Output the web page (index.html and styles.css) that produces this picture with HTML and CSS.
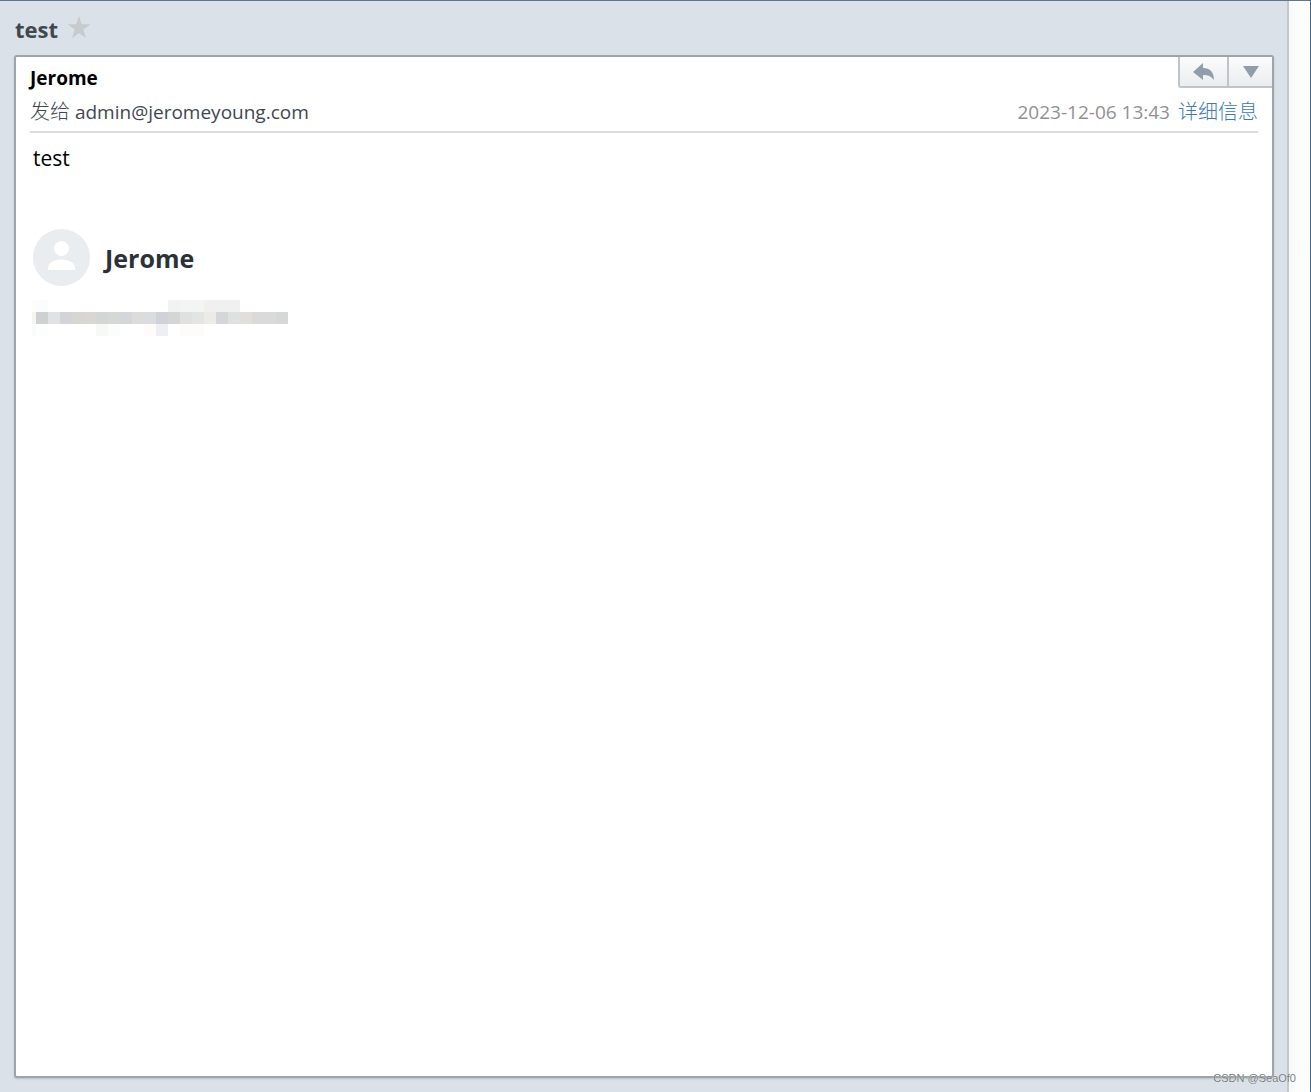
FILE: index.html
```
<!DOCTYPE html>
<html lang="zh-CN">
<head>
<meta charset="utf-8">
<title>test</title>
<link rel="stylesheet" href="styles.css">
</head>
<body>
<div class="window">
  <main class="reader">
    <header class="subject">
      <h1 class="subject-title">test</h1>
      <button class="star" type="button" aria-label="星标">
        <svg width="24" height="24" viewBox="0 0 24 24"><path d="M12 1l2.800 8.200H23.500l-7.200 5.300 2.700 8.700L12 18 5 23.200l2.700-8.700L.5 9.200h8.700z" fill="#c8cbcd"/></svg>
      </button>
    </header>
    <article class="mail">
      <div class="mail-top">
        <h2 class="sender">Jerome</h2>
        <div class="actions">
          <button class="action reply" type="button" aria-label="回复">
            <svg width="22" height="18" viewBox="0 0 22 18"><path d="M0 9L10 0v5c7 0 11 4 11 12-3-4-6-5-11-5v5z" fill="#929dab"/></svg>
          </button>
          <button class="action more" type="button" aria-label="更多">
            <svg width="16" height="12" viewBox="0 0 16 12"><path d="M0 0h16L8 12z" fill="#929dab"/></svg>
          </button>
        </div>
      </div>
      <div class="meta">
        <span class="recipient"><span class="label">发给</span> admin@jeromeyoung.com</span>
        <span class="info"><time>2023-12-06 13:43</time><a class="label" href="#details">详细信息</a></span>
      </div>
      <div class="content">
        <p class="message">test</p>
        <div class="signature">
          <svg width="57" height="57" viewBox="0 0 57 57"><circle cx="28.500" cy="28.500" r="28.500" fill="#e9edf0"/><circle cx="28.500" cy="19.500" r="7.500" fill="#fff"/><path d="M15 41v-2c0-5 6-8.500 13.500-8.500S42 34 42 39v2z" fill="#fff"/></svg>
          <strong class="signature-name">Jerome</strong>
        </div>
        <svg class="mosaic" width="256" height="36" viewBox="0 0 256 36" shape-rendering="crispEdges">
          <path d="M0 0h4v12H0z" fill="#fdfdfb"/><path d="M4 0h12v12H4z" fill="#fbfdfd"/>
          <path d="M136 0h12v12h-12z" fill="#f1f2f2"/><path d="M148 0h24v12h-24z" fill="#f3f5f4"/><path d="M172 0h36v12h-36z" fill="#f0f0f0"/>
          <path d="M0 12h4v12H0z" fill="#f5f4ef"/><path d="M4 12h12v12H4z" fill="#cfd0d2"/><path d="M16 12h12v12H16z" fill="#e1e2e5"/><path d="M28 12h12v12H28z" fill="#d3d4d8"/><path d="M40 12h12v12H40z" fill="#d6d6d3"/><path d="M52 12h12v12H52z" fill="#d8d7d4"/><path d="M64 12h12v12H64z" fill="#d4d6d5"/><path d="M76 12h12v12H76z" fill="#d6d8d7"/><path d="M88 12h12v12H88z" fill="#d5d6da"/><path d="M100 12h12v12h-12z" fill="#dddcda"/><path d="M112 12h12v12h-12z" fill="#dbdce0"/><path d="M124 12h12v12h-12z" fill="#d1d2d8"/><path d="M136 12h12v12h-12z" fill="#d4d6d5"/><path d="M148 12h12v12h-12z" fill="#e0e0e1"/><path d="M160 12h12v12h-12z" fill="#e3e5e5"/><path d="M172 12h12v12h-12z" fill="#edebe6"/><path d="M184 12h12v12h-12z" fill="#d5d6da"/><path d="M196 12h12v12h-12z" fill="#dfe1e1"/><path d="M208 12h12v12h-12z" fill="#e0dfdc"/><path d="M220 12h24v12h-24z" fill="#dadadb"/><path d="M244 12h12v12h-12z" fill="#d6d8d7"/>
          <path d="M0 24h4v12H0z" fill="#fafafa"/><path d="M4 24h12v12H4z" fill="#fcfefd"/><path d="M64 24h12v12H64z" fill="#f8f8f7"/><path d="M76 24h12v12H76z" fill="#fbfdfc"/><path d="M112 24h12v12h-12z" fill="#fefbfa"/><path d="M124 24h12v12h-12z" fill="#eeeff3"/><path d="M148 24h24v12h-24z" fill="#fdfcfb"/>
        </svg>
      </div>
    </article>
  </main>
  <div class="gutter"></div>
</div>
<div class="watermark">CSDN @SeaOf0</div>
</body>
</html>
```
FILE: styles.css
```
* { box-sizing: border-box; }

body {
  margin: 0;
  font-family: "Open Sans", "Noto Sans CJK SC", sans-serif;
  font-size: 19px;
  line-height: 28px;
  color: #40474f;
}

h1, h2, p { margin: 0; }

button {
  padding: 0;
  border: 0;
  background: none;
}

svg { display: block; }

.window {
  display: flex;
  min-height: 100vh;
  border-top: 1px solid #62748f;
  border-right: 1px solid #3f6794;
}

.reader {
  flex: 1;
  display: flex;
  flex-direction: column;
  padding: 14px 13px 14px 14px;
  background: #dae1e8;
}

.gutter {
  width: 23px;
  border-left: 2px solid #c5c8ca;
  background: linear-gradient(90deg, #f8faf9, #fff);
}

.subject {
  display: flex;
  gap: 9px;
  height: 40px;
  padding-left: 1px;
}

.subject-title {
  font-size: 22px;
  line-height: 28px;
}

.star { height: 24px; }

.mail {
  flex: 1;
  border: 2px solid #9ca5a9;
  border-radius: 3px;
  background: #fff;
  box-shadow: 0 1px 2px #b9c1c7;
}

.mail-top {
  display: flex;
  justify-content: space-between;
  height: 41px;
  padding-left: 14px;
}

.sender {
  padding-top: 7px;
  font-size: 19px;
  line-height: 28px;
  color: #000;
}

.actions {
  display: flex;
  height: 31px;
}

.action {
  display: grid;
  place-items: center;
  border: solid #bdc5ca;
  border-width: 0 0 2px 2px;
  background: linear-gradient(#fcfcfd, #eaecef);
}

.reply {
  width: 49px;
  border-bottom-left-radius: 3px;
}

.more { width: 45px; }

.meta {
  display: flex;
  justify-content: space-between;
  height: 35px;
  margin: 0 14px;
  border-bottom: 2px solid #dcdcdc;
}

.label {
  font-size: 20px;
  font-weight: 300;
}

.info {
  display: flex;
  gap: 8px;
  color: #919191;
}

.info a {
  color: #3c7ab5;
  text-decoration: none;
}

.content { padding: 11px 16px; }

.message {
  padding-left: 1px;
  font-size: 21px;
  color: #000;
}

.signature {
  display: flex;
  align-items: center;
  gap: 15px;
  margin-top: 57px;
  padding-left: 1px;
}

.signature-name {
  font-size: 25px;
  color: #2b3138;
}

.mosaic { margin-top: 14px; }

.watermark {
  position: absolute;
  right: 15px;
  bottom: 6px;
  font-family: "Liberation Sans", sans-serif;
  font-size: 11px;
  line-height: 16px;
  color: #777c80;
  text-shadow: 0 0 1px #fff;
}
```
